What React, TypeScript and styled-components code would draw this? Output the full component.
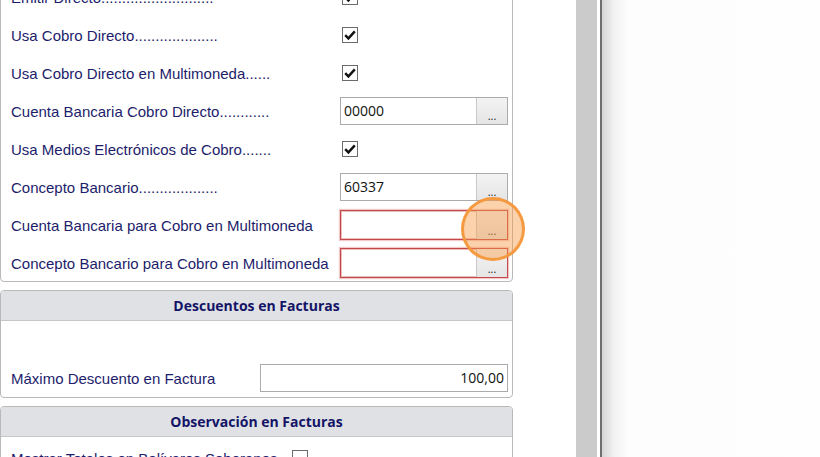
import React from "react";
import styled, { createGlobalStyle } from "styled-components";

const Global = createGlobalStyle`
  html, body { margin: 0; padding: 0; background: #ffffff; }
  body { width: 820px; height: 457px; overflow: hidden; font-family: "Liberation Sans", Arial, sans-serif; }
  #root { height: 457px; }
`;

const Page = styled.div`
  display: flex;
  height: 457px;
  overflow: hidden;
  position: relative;
`;

const LeftColumn = styled.div`
  width: 513px;
  flex: none;
  margin-right: 63px;
  display: flex;
  flex-direction: column;
  gap: 8px;
`;

const Track = styled.div`
  width: 21px;
  flex: none;
  background: #cbcbcb;
`;

const Spacer = styled.div`
  width: 3px;
  flex: none;
  background: #ffffff;
`;

const Divider = styled.div`
  width: 2px;
  flex: none;
  background: #6f6f6f;
`;

const Shade = styled.div`
  flex: 1;
  background: linear-gradient(to right, #d6d6d6 0px, #f1f1f1 12px, #fdfdfd 26px, #fefefe 100%);
`;

const Panel = styled.div<{ $offset?: number }>`
  box-sizing: border-box;
  width: 513px;
  border: 1px solid #b9b9b9;
  border-radius: 4px;
  background: #ffffff;
  margin-top: ${(p) => p.$offset ?? 0}px;
  flex: none;
  overflow: hidden;
`;

const FieldList = styled.div`
  display: flex;
  flex-direction: column;
  gap: 8px;
  padding: 5px 4px 3px 0;
`;

const Row = styled.div<{ $labelWidth: number }>`
  display: grid;
  grid-template-columns: ${(p) => p.$labelWidth}px 1fr;
  align-items: center;
  height: 30px;
`;

const Label = styled.span`
  padding-left: 10px;
  font-size: 15px;
  color: #1d1d6b;
  white-space: nowrap;
  overflow: hidden;
`;

const CheckBox = styled.span<{ $checked?: boolean }>`
  box-sizing: border-box;
  width: 16px;
  height: 16px;
  margin-left: 2px;
  border: 1px solid #6b6b6b;
  background: #ffffff;
  display: flex;
  align-items: center;
  justify-content: center;
`;

const InputGroup = styled.div<{ $error?: boolean }>`
  box-sizing: border-box;
  display: flex;
  height: ${(p) => (p.$error ? 30 : 28)}px;
  border: 1px solid ${(p) => (p.$error ? "#c4484a" : "#ababab")};
  box-shadow: ${(p) => (p.$error ? "inset 0 0 0 1px rgba(214,110,110,0.45), 0 0 1px 1px rgba(230,150,150,0.5)" : "none")};
  background: #ffffff;
`;

const TextValue = styled.div<{ $align?: string }>`
  flex: 1;
  padding: 0 3px 2px 3px;
  font-family: "Open Sans", "Noto Sans", sans-serif;
  font-size: 14px;
  color: #111111;
  display: flex;
  align-items: center;
  justify-content: ${(p) => (p.$align === "right" ? "flex-end" : "flex-start")};
`;

const DotsButton = styled.div`
  width: 31px;
  flex: none;
  border-left: 1px solid #c9c9c9;
  background: linear-gradient(to bottom, #f3f3f3, #e5e5e5);
  display: flex;
  align-items: flex-end;
  justify-content: center;
  padding-bottom: 3px;
  box-sizing: border-box;
  font-family: "Open Sans", sans-serif;
  font-size: 11px;
  color: #222222;
  line-height: 1;
`;

const Header = styled.div`
  height: 29px;
  background: #dfe1e5;
  border-bottom: 1px solid #c6c6c6;
  display: flex;
  align-items: center;
  justify-content: center;
  font-family: "Open Sans", "Noto Sans", sans-serif;
  font-weight: 700;
  font-size: 14px;
  color: #141466;
`;

const Body = styled.div<{ $top: number; $bottom: number }>`
  padding: ${(p) => p.$top}px 4px ${(p) => p.$bottom}px 0;
`;

const Highlight = styled.div`
  position: absolute;
  left: 461px;
  top: 197px;
  width: 64px;
  height: 64px;
  box-sizing: border-box;
  border-radius: 50%;
  border: 3px solid rgba(244, 152, 60, 0.95);
  background: rgba(246, 155, 70, 0.45);
  pointer-events: none;
`;

const Check = () => (
  <svg width="14" height="14" viewBox="0 0 14 14">
    <path d="M2.2 7.2 L5.4 10.4 L11.8 3.4" fill="none" stroke="#111" strokeWidth="2.4" strokeLinecap="butt" strokeLinejoin="miter" />
  </svg>
);

type Field =
  | { label: string; kind: "check"; checked: boolean }
  | { label: string; kind: "input"; value: string; error?: boolean };

const fields: Field[] = [
  { label: "Emitir Directo...........................", kind: "check", checked: true },
  { label: "Usa Cobro Directo....................", kind: "check", checked: true },
  { label: "Usa Cobro Directo en Multimoneda......", kind: "check", checked: true },
  { label: "Cuenta Bancaria Cobro Directo............", kind: "input", value: "00000" },
  { label: "Usa Medios Electrónicos de Cobro.......", kind: "check", checked: true },
  { label: "Concepto Bancario...................", kind: "input", value: "60337" },
  { label: "Cuenta Bancaria para Cobro en Multimoneda", kind: "input", value: "", error: true },
  { label: "Concepto Bancario para Cobro en Multimoneda", kind: "input", value: "", error: true },
];

export default function App() {
  return (
    <>
      <Global />
      <Page>
        <LeftColumn>
          <Panel $offset={-24}>
            <FieldList>
              {fields.map((f) => (
                <Row key={f.label} $labelWidth={339}>
                  <Label>{f.label}</Label>
                  {f.kind === "check" ? (
                    <CheckBox $checked={f.checked}>{f.checked && <Check />}</CheckBox>
                  ) : (
                    <InputGroup $error={f.error}>
                      <TextValue>{f.value}</TextValue>
                      <DotsButton>...</DotsButton>
                    </InputGroup>
                  )}
                </Row>
              ))}
            </FieldList>
          </Panel>
          <Panel>
            <Header>Descuentos en Facturas</Header>
            <Body $top={42} $bottom={4}>
              <Row $labelWidth={259}>
                <Label>Máximo Descuento en Factura</Label>
                <InputGroup>
                  <TextValue $align="right">100,00</TextValue>
                </InputGroup>
              </Row>
            </Body>
          </Panel>
          <Panel>
            <Header>Observación en Facturas</Header>
            <Body $top={6} $bottom={6}>
              <Row $labelWidth={289}>
                <Label>Mostrar Totales en Bolívares Soberanos</Label>
                <CheckBox />
              </Row>
            </Body>
          </Panel>
        </LeftColumn>
        <Track />
        <Spacer />
        <Divider />
        <Shade />
        <Highlight />
      </Page>
    </>
  );
}
